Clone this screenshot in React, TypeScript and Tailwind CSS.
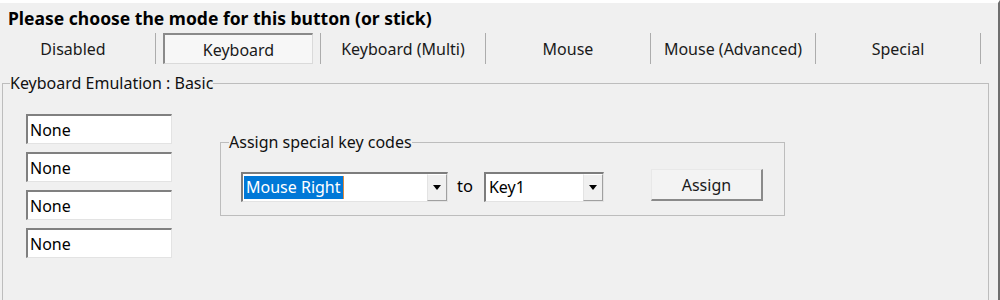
import React from "react"

const tabs = ["Disabled", "Keyboard", "Keyboard (Multi)", "Mouse", "Mouse (Advanced)", "Special"]

function Combo({ width, children }: { width: string; children: React.ReactNode }) {
  return (
    <div
      className={`${width} h-[30px] flex bg-white border-t-2 border-l-2 border-t-[#7d7d7d] border-l-[#7d7d7d] border-b border-r border-b-[#e3e3e3] border-r-[#e3e3e3]`}
    >
      <div className="flex-1 flex items-center pl-[1px] overflow-hidden">{children}</div>
      <div className="w-[20px] h-full flex items-center justify-center bg-[#f0f0f0] border-l border-t border-l-[#e3e3e3] border-t-[#ffffff] border-r border-b border-r-[#a0a0a0] border-b-[#a0a0a0]">
        <svg width="8" height="5" viewBox="0 0 8 5">
          <path d="M0 0 H8 L4 5 Z" fill="#000" />
        </svg>
      </div>
    </div>
  )
}

export default function App() {
  return (
    <div className="w-[1000px] h-[300px] overflow-hidden bg-[#f0f0f0] border-t-[3px] border-t-white border-r-2 border-r-[#6e6e6e] font-['Noto_Sans','Open_Sans',sans-serif] text-black">
      {/* Title */}
      <div className="pl-2 pt-[4px] h-[30px] text-[17.5px] leading-[23px] font-bold">
        Please choose the mode for this button (or stick)
      </div>

      {/* Mode tabs */}
      <div className="flex ml-[-9px] h-[31px]">
        {tabs.map((t) => (
          <div key={t} className="w-[165px] h-full border-r border-r-[#acacac] px-[7px] flex">
            {t === "Keyboard" ? (
              <div className="flex-1 flex items-center justify-center bg-[#f7f7f7] border-t-2 border-l-2 border-t-[#8a8a8a] border-l-[#8a8a8a] border-b border-r border-b-[#dadada] border-r-[#dadada] text-[16px] text-[#1a1a1a] pt-[2px]">
                {t}
              </div>
            ) : (
              <div className="flex-1 flex items-center justify-center text-[16px] text-[#1a1a1a]">{t}</div>
            )}
          </div>
        ))}
      </div>

      {/* Group box */}
      <fieldset className="mt-[8px] ml-[2px] w-[987px] h-[240px] border border-[#bdbdbd] pl-[23px] pt-[20px]">
        <legend className="ml-[-16px] text-[16px] leading-[22px] text-[#111]">Keyboard Emulation : Basic</legend>
        <div className="flex">
          <div className="flex flex-col gap-2">
            {[0, 1, 2, 3].map((i) => (
              <div
                key={i}
                className="w-[146px] h-[30px] bg-white border-t-2 border-l-2 border-t-[#808080] border-l-[#808080] border-b border-r border-b-[#e3e3e3] border-r-[#e3e3e3] pl-[2px] flex items-center text-[16px]"
              >
                None
              </div>
            ))}
          </div>

          <fieldset className="ml-[48px] mt-[17px] w-[565px] h-[85px] border border-[#bdbdbd] pl-[20px] pt-[16px]">
            <legend className="ml-[-12px] text-[16px] leading-[22px] text-[#111]">Assign special key codes</legend>
            <div className="flex items-center">
              <Combo width="w-[207px]">
                <span className="bg-[#0078d7] text-white text-[16px] leading-[23px] pl-[2px] pr-[2px] border-r border-r-[#e08a3c]">
                  Mouse Right
                </span>
              </Combo>
              <span className="ml-[9px] mr-[11px] text-[16.5px]">to</span>
              <Combo width="w-[120px]">
                <span className="text-[16px] pl-[2px]">Key1</span>
              </Combo>
              <button className="ml-[47px] mb-[3px] w-[112px] h-[32px] bg-[#f3f3f3] border-t border-l border-t-[#e8e8e8] border-l-[#e8e8e8] border-b-2 border-r-2 border-b-[#8a8a8a] border-r-[#8a8a8a] text-[16px] text-[#1a1a1a] font-['Noto_Sans','Open_Sans',sans-serif]">
                Assign
              </button>
            </div>
          </fieldset>
        </div>
      </fieldset>
    </div>
  )
}
